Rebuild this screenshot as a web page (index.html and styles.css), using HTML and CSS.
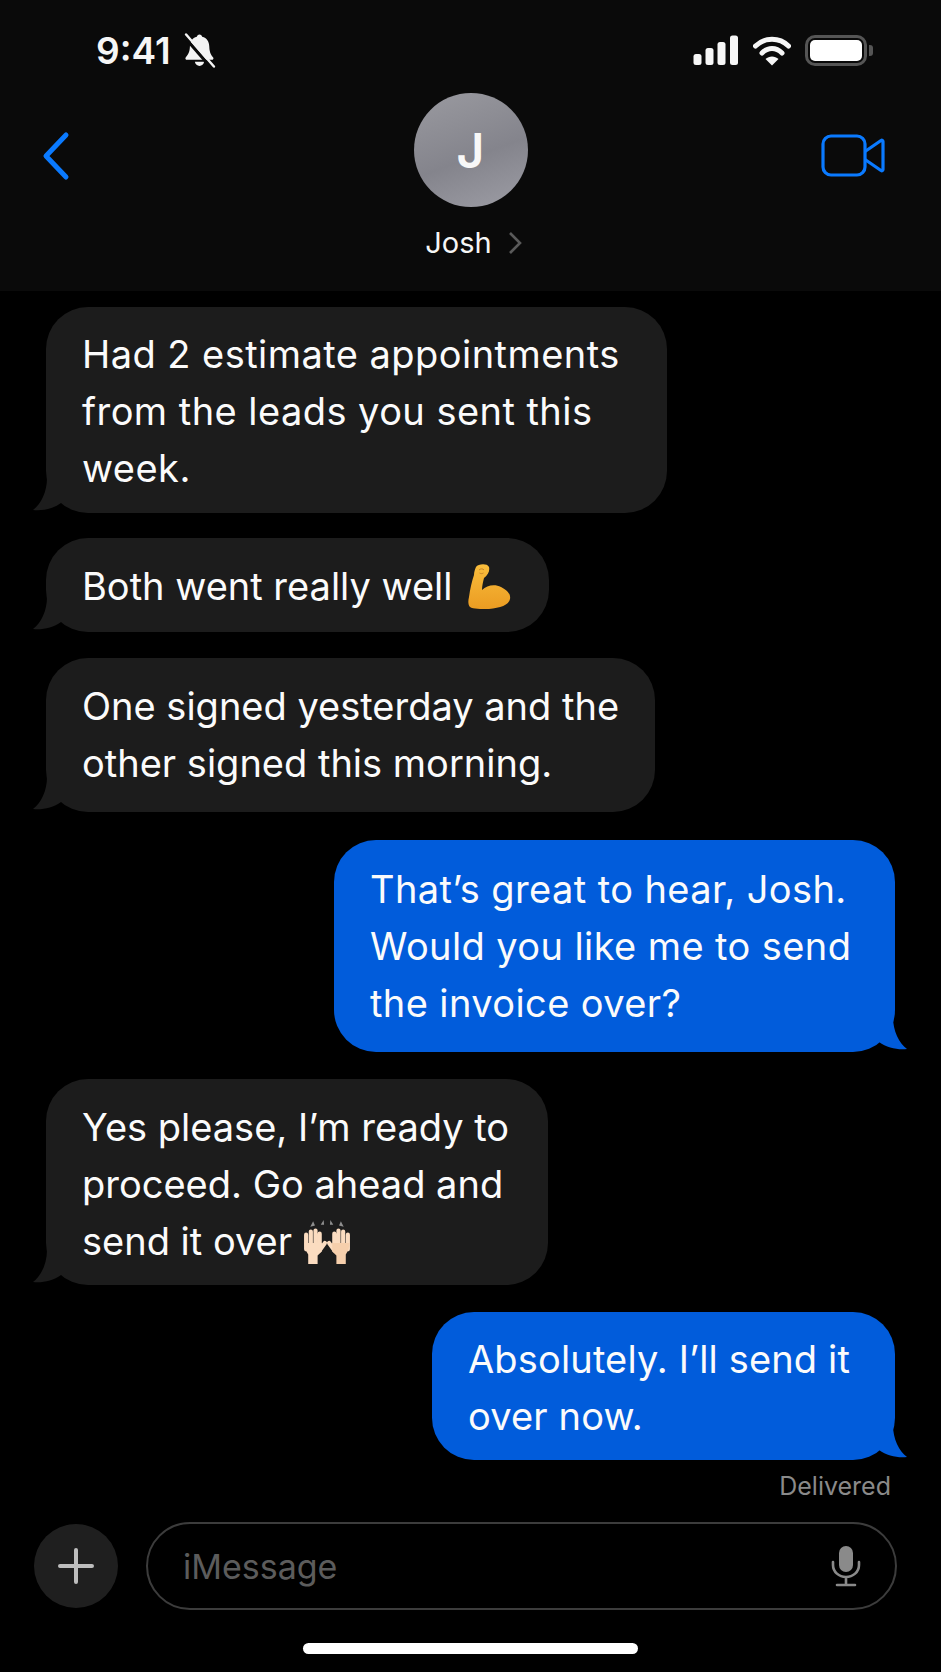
FILE: index.html
```html
<!DOCTYPE html>
<html lang="en">
<head>
  <meta charset="UTF-8" />
  <title>Messages</title>
  <link rel="stylesheet" href="styles.css">
</head>
<body>
<div class="phone">
  <header class="top">
    <div class="status">
      <div class="status-left">
        <span class="time">9:41</span>
        <svg class="bell" width="33" height="35" viewBox="0 0 32 34">
          <path d="M16 1.500c-1.400 0-2.400 1-2.600 2.200C8.900 4.800 6.900 8.300 6.700 13c-.2 4.400-1 7-4 10.500-.9 1.100-.3 2.600 1.300 2.600h24c1.300 0 2-1.200 1.300-2.300-2.900-3.600-3.600-6.300-3.800-10.800-.2-4.700-2.300-8.200-6.900-9.300-.2-1.200-1.200-2.200-2.600-2.200z" fill="#f4f4f4"/>
          <path d="M11.500 28h9c-.4 2.400-2.300 4-4.500 4s-4.100-1.600-4.500-4z" fill="#f4f4f4"/>
          <path d="M1 3.500l27 31" stroke="#0a0a0a" stroke-width="3"/>
          <path d="M3 1.500l27 31" stroke="#f4f4f4" stroke-width="2.400" stroke-linecap="round"/>
        </svg>
      </div>
      <div class="status-right">
        <svg width="46" height="30" viewBox="0 0 46 30" fill="#f6f6f6">
          <rect x="0.500" y="19" width="8" height="11" rx="2.500"/>
          <rect x="12.500" y="13" width="8" height="17" rx="2.500"/>
          <rect x="24.500" y="7" width="8" height="23" rx="2.500"/>
          <rect x="37" y="0.500" width="8" height="29.500" rx="2.500"/>
        </svg>
        <svg width="38" height="31" viewBox="0 0 38 31">
          <path d="M2.500 11C11.500 2 26.500 2 35.500 11" fill="none" stroke="#f6f6f6" stroke-width="5" stroke-linecap="round"/>
          <path d="M9 18c6-6 14-6 20 0" fill="none" stroke="#f6f6f6" stroke-width="5" stroke-linecap="round"/>
          <path d="M19 30.500l-6.500-6.500c3.600-3.400 9.400-3.400 13 0z" fill="#f6f6f6"/>
        </svg>
        <div class="battery"><div class="battery-fill"></div></div>
      </div>
    </div>
    <div class="nav">
      <svg class="back" width="30" height="50" viewBox="0 0 30 50">
        <path d="M25 4L5 25l20 21" fill="none" stroke="#0a7aff" stroke-width="5" stroke-linecap="round" stroke-linejoin="round"/>
      </svg>
      <div class="contact">
        <div class="avatar">J</div>
        <div class="contact-name">
          <span>Josh</span>
          <svg width="14" height="24" viewBox="0 0 14 24">
            <path d="M2 2l10 10L2 22" fill="none" stroke="#5a5a5a" stroke-width="2.600"/>
          </svg>
        </div>
      </div>
      <svg class="video" width="64" height="44" viewBox="0 0 64 44">
        <rect x="2" y="2" width="42" height="39" rx="8" fill="none" stroke="#0a7aff" stroke-width="3.200"/>
        <path d="M44 17.500L60 6.500c1-.6 2-.2 2 1v28c0 1.200-1 1.600-2 1L44 25.500" fill="none" stroke="#0a7aff" stroke-width="3.200" stroke-linejoin="round"/>
      </svg>
    </div>
  </header>

  <main class="thread">
    <div class="bubble in b1">
      Had 2 estimate appointments<br>from the leads you sent this<br>week.
      <svg class="tail" width="28" height="33" viewBox="0 0 28 33"><path d="M14 0C14 14 8 26 0 32c9 1 20-1 28-7L28 0z"/></svg>
    </div>
    <div class="bubble in b2">
      Both went really well
      <svg class="emoji" width="44" height="46" viewBox="0 0 44 46">
        <defs>
          <linearGradient id="arm" x1="0" y1="0" x2="0" y2="1">
            <stop offset="0" stop-color="#f9bd3c"/>
            <stop offset="1" stop-color="#eb9c22"/>
          </linearGradient>
        </defs>
        <path d="M9 4C11 1 20 0 22 4C23 8 21 12 17 15C16 19 15 23 15 27C20 22 28 21 34 24C40 27 44 31 43 36C42 42 33 45 22 46C14 46 6 46 3 44C1 42 1 38 2 34C3 26 5 18 7 12C7 9 8 6 9 4z" fill="url(#arm)"/>
        <path d="M12 7c1.500-1.500 4-1.500 5 0M12.500 10c1 .8 3 .8 4 0" fill="none" stroke="#c6842a" stroke-width="1"/>
      </svg>
      <svg class="tail" width="28" height="33" viewBox="0 0 28 33"><path d="M14 0C14 14 8 26 0 32c9 1 20-1 28-7L28 0z"/></svg>
    </div>
    <div class="bubble in b3">
      One signed yesterday and the<br>other signed this morning.
      <svg class="tail" width="28" height="33" viewBox="0 0 28 33"><path d="M14 0C14 14 8 26 0 32c9 1 20-1 28-7L28 0z"/></svg>
    </div>
    <div class="bubble out b4">
      That’s great to hear, Josh.<br>Would you like me to send<br>the invoice over?
      <svg class="tail" width="28" height="33" viewBox="0 0 28 33"><path d="M14 0C14 14 20 26 28 32c-9 1-20-1-28-7L0 0z"/></svg>
    </div>
    <div class="bubble in b5">
      Yes please, I’m ready to<br>proceed. Go ahead and<br>send it over
      <svg class="emoji hands" width="48" height="44" viewBox="0 0 46 42">
        <g fill="none" stroke="#fbdcc0" stroke-width="4" stroke-linecap="round">
          <path d="M3 14v14M7.500 11v14M12 10v14M16 13v12M16 29l5-7"/>
          <path d="M43 14v14M38.500 11v14M34 10v14M30 13v12M30 29l-5-7"/>
        </g>
        <path d="M1.500 22h16.500v8l-4 4v8H5v-9c-2-3-3.500-7-3.500-11z" fill="#fbdcc0"/>
        <path d="M44.500 22H28v8l4 4v8h9v-9c2-3 3.500-7 3.500-11z" fill="#f6cfac"/>
        <g fill="#8f8f8f">
          <path d="M7 6.500l4.500-1.200-1.800-4.300z"/><path d="M17 4.500h3.200L19.800 0z"/><path d="M25.800 4.500H29L26.200 0z"/><path d="M36.300 1l-1.800 4.300L39 6.500z"/>
        </g>
      </svg>
      <svg class="tail" width="28" height="33" viewBox="0 0 28 33"><path d="M14 0C14 14 8 26 0 32c9 1 20-1 28-7L28 0z"/></svg>
    </div>
    <div class="bubble out b6">
      Absolutely. I’ll send it<br>over now.
      <svg class="tail" width="28" height="33" viewBox="0 0 28 33"><path d="M14 0C14 14 20 26 28 32c-9 1-20-1-28-7L0 0z"/></svg>
    </div>
    <div class="delivered">Delivered</div>
  </main>

  <footer class="composer">
    <div class="plus">
      <svg width="36" height="36" viewBox="0 0 36 36">
        <path d="M18 2v32M2 18h32" stroke="#bdbdbd" stroke-width="4" stroke-linecap="round"/>
      </svg>
    </div>
    <div class="field">
      <span class="placeholder">iMessage</span>
      <svg width="30" height="42" viewBox="0 0 30 42">
        <rect x="8" y="1" width="14" height="26" rx="7" fill="#8a8a8a"/>
        <path d="M2 17v3c0 7 6 12 13 12s13-5 13-12v-3M15 32v7M6 40h18" fill="none" stroke="#8a8a8a" stroke-width="2.600" stroke-linecap="round"/>
      </svg>
    </div>
  </footer>
  <div class="home-row"><div class="home-bar"></div></div>
</div>
</body>
</html>
```

FILE: styles.css
```css
* {
  box-sizing: border-box;
}

body {
  margin: 0;
  background-color: #000;
  font-family: Inter, "Liberation Sans", sans-serif;
  color: #f6f6f6;
}

.phone {
  width: 941px;
  height: 1672px;
  overflow: hidden;
  display: flex;
  flex-direction: column;
}

.top {
  height: 291px;
  background-color: #0a0a0a;
  padding-top: 33px;
}

.status {
  display: flex;
  justify-content: space-between;
  align-items: center;
  height: 34px;
  padding: 0 74px 0 96px;
}

.status-left {
  display: flex;
  align-items: center;
  gap: 12px;
}

.time {
  font-size: 37px;
  font-weight: 600;
}

.status-right {
  display: flex;
  align-items: center;
  gap: 14px;
}

.battery {
  position: relative;
  width: 62px;
  height: 31px;
  border: 3px solid #555;
  border-radius: 10px;
  padding: 2px;
}

.battery::after {
  content: "";
  position: absolute;
  right: -9px;
  top: 7px;
  width: 4px;
  height: 11px;
  background-color: #555;
  border-radius: 0 3px 3px 0;
}

.battery-fill {
  height: 100%;
  background-color: #fff;
  border-radius: 5px;
}

.nav {
  display: grid;
  grid-template-columns: 1fr auto 1fr;
  padding: 26px 41px 0;
}

.back {
  margin-top: 38px;
}

.video {
  margin-top: 41px;
  margin-right: 15px;
  justify-self: end;
}

.contact {
  display: flex;
  flex-direction: column;
  align-items: center;
}

.avatar {
  width: 114px;
  height: 114px;
  border-radius: 50%;
  background: linear-gradient(160deg, #9a9aa0, #84848c 55%, #9d9da5);
  display: flex;
  align-items: center;
  justify-content: center;
  font-size: 48px;
  font-weight: 600;
  color: #f8f8f8;
}

.contact-name {
  display: flex;
  align-items: center;
  gap: 16px;
  margin-top: 16px;
  margin-left: 6px;
  font-size: 29px;
  line-height: 40px;
}

.thread {
  flex: 1;
  display: flex;
  flex-direction: column;
  padding: 16px 46px 0;
}

.bubble {
  position: relative;
  padding-left: 36px;
  border-radius: 42px;
  font-size: 38px;
  line-height: 57px;
  color: #fbfbfb;
}

.bubble.in {
  background-color: #1c1c1c;
  fill: #1c1c1c;
}

.bubble.out {
  align-self: flex-end;
  background-color: #015cdb;
  fill: #015cdb;
}

.b1 {
  width: 621px;
  padding-top: 19px;
  padding-bottom: 16px;
  letter-spacing: 0.45px;
}

.b2 {
  width: 503px;
  margin-top: 25px;
  padding-top: 20px;
  padding-bottom: 17px;
}

.b3 {
  width: 609px;
  margin-top: 26px;
  padding-top: 20px;
  padding-bottom: 20px;
}

.b4 {
  width: 561px;
  margin-top: 28px;
  padding-top: 21px;
  padding-bottom: 20px;
  letter-spacing: 0.4px;
}

.b5 {
  width: 502px;
  margin-top: 27px;
  padding-top: 20px;
  padding-bottom: 15px;
}

.b6 {
  width: 463px;
  margin-top: 27px;
  padding-top: 19px;
  padding-bottom: 15px;
  letter-spacing: 0.15px;
}

.tail {
  position: absolute;
  bottom: 2px;
}

.in .tail {
  left: -13px;
}

.out .tail {
  right: -12px;
}

.emoji {
  vertical-align: -9px;
  margin-left: 4px;
}

.hands {
  margin-left: 0;
}

.delivered {
  align-self: flex-end;
  margin-top: 11px;
  padding-right: 4px;
  font-size: 25px;
  line-height: 30px;
  color: #8a8a8a;
}

.composer {
  display: flex;
  align-items: center;
  gap: 28px;
  padding: 0 44px 0 34px;
}

.plus {
  width: 84px;
  height: 84px;
  border-radius: 50%;
  background-color: #1f1f1f;
  display: flex;
  align-items: center;
  justify-content: center;
}

.field {
  flex: 1;
  height: 88px;
  border: 2px solid #3c3c3c;
  border-radius: 44px;
  display: flex;
  align-items: center;
  justify-content: space-between;
  padding: 0 34px 0 35px;
}

.placeholder {
  font-size: 34px;
  color: #5c5c5c;
}

.home-row {
  display: flex;
  justify-content: center;
  padding: 33px 0 18px;
}

.home-bar {
  width: 335px;
  height: 11px;
  border-radius: 6px;
  background-color: #fff;
}
```
